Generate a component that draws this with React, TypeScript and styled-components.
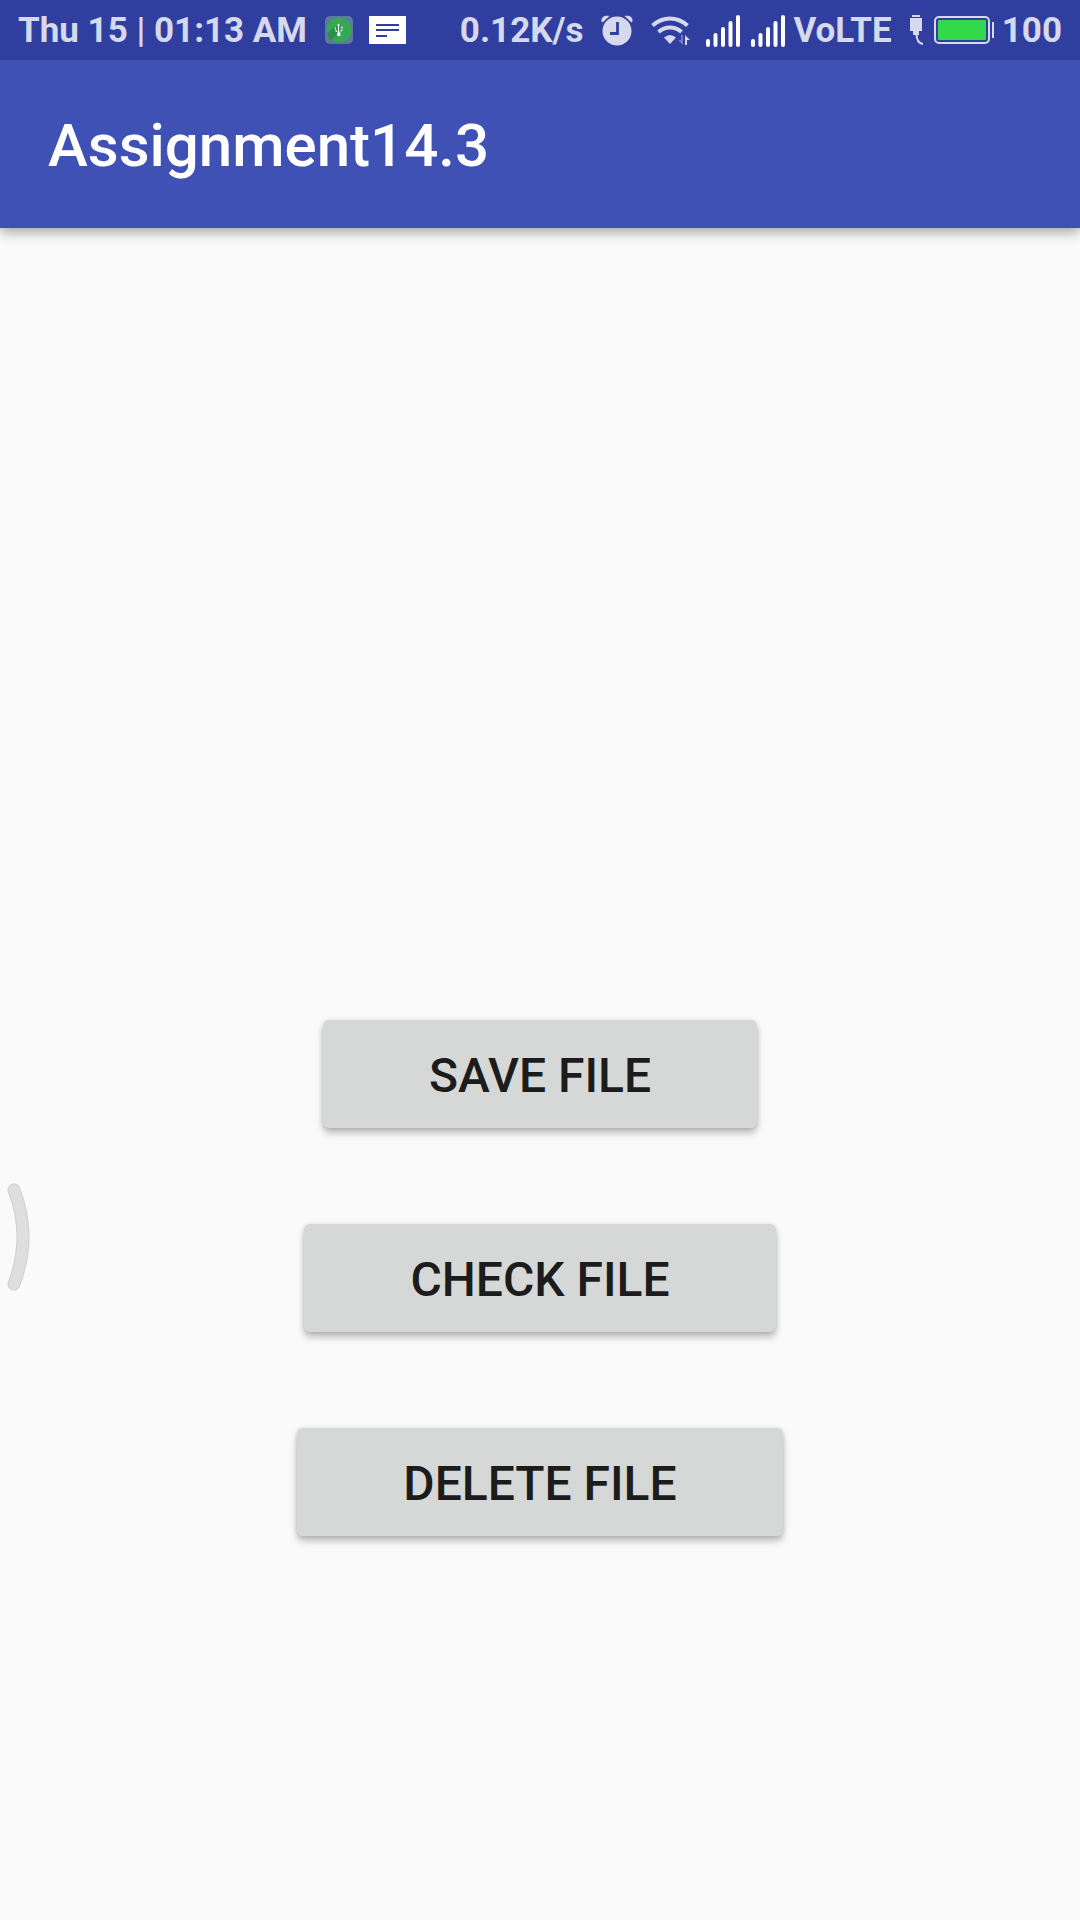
import React from "react";
import styled, { createGlobalStyle } from "styled-components";

const GlobalStyle = createGlobalStyle`
  *, *::before, *::after { box-sizing: border-box; }
  body {
    margin: 0;
    background: #fafafa;
    font-family: Roboto, "Noto Sans", sans-serif;
  }
`;

const Screen = styled.div`
  display: flex;
  flex-direction: column;
  min-height: 100vh;
`;

const StatusBar = styled.div`
  position: relative;
  z-index: 1;
  display: flex;
  align-items: center;
  justify-content: space-between;
  height: 60px;
  padding: 0 18px;
  background: #303f9f;
  color: #d6d9ec;
  font-size: 35px;
  font-weight: 700;
  line-height: 40px;
  white-space: nowrap;
`;

const StatusGroup = styled.div<{ $gap: number }>`
  display: flex;
  align-items: center;
  gap: ${(p) => p.$gap}px;
`;

const StatusText = styled.span`
  padding-top: 2px;
`;

const Glyph = styled.svg`
  display: block;
  flex: none;
`;

const AppBar = styled.header`
  display: flex;
  align-items: center;
  height: 168px;
  padding: 4px 48px 0;
  background: #3f51b5;
  box-shadow: 0 4px 12px rgba(0, 0, 0, 0.36);
`;

const Title = styled.h1`
  margin: 0;
  color: #ffffff;
  font-size: 60px;
  font-weight: 500;
  line-height: 72px;
`;

const Content = styled.main`
  position: relative;
  flex: 1;
  display: grid;
  grid-template-rows: 1fr auto 1fr;
  justify-items: center;
`;

const Actions = styled.div`
  grid-row: 3;
  display: flex;
  flex-direction: column;
  align-items: center;
  gap: 96px;
  padding-top: 96px;
`;

const ActionButton = styled.button`
  height: 108px;
  padding: 3px 106px 0;
  border: 0;
  border-radius: 6px;
  background: #d6d8d7;
  color: #1c1c1c;
  box-shadow: 0 5px 7px rgba(0, 0, 0, 0.26), 0 0 4px rgba(0, 0, 0, 0.1);
  font: 500 48px/56px Roboto, "Noto Sans", sans-serif;
  text-transform: uppercase;
  cursor: pointer;
`;

const PrimaryAction = styled(ActionButton)`
  grid-row: 2;
`;

const EdgeHandle = styled.svg`
  position: absolute;
  left: 0;
  top: 948px;
`;

const UsbAppIcon = () => (
  <Glyph width="28" height="28" viewBox="0 0 28 28">
    <rect width="28" height="28" rx="5" fill="#5b7a9c" />
    <circle cx="14" cy="14" r="12.5" fill="#34a853" />
    <path d="M2 17L14 8l1 9-9 7a12.500 12.500 0 0 1-4-7z" fill="#2b8f47" />
    <path d="M13.500 8v10" fill="none" stroke="#fff" strokeWidth="1" />
    <path d="M10.500 11.500v3l3 2.500M17 10.500v3.500l-3.500 3" fill="none" stroke="#fff" strokeWidth="1.200" strokeDasharray="2 1" />
    <path d="M12 9.500l1.500-2 1.500 2z" fill="#fff" />
    <rect x="12" y="17" width="3.500" height="3" rx="1" fill="#fff" />
  </Glyph>
);

const MessageIcon = () => (
  <Glyph width="37" height="28" viewBox="0 0 37 28">
    <path d="M0 0h37v28H0z" fill="#fff" />
    <path d="M7 9h23M7 14h23M7 20h11" stroke="#303f9f" strokeWidth="2" />
  </Glyph>
);

const AlarmIcon = () => (
  <Glyph width="32" height="32" viewBox="0 0 32 32" fill="#d6d9ec">
    <circle cx="16" cy="17" r="14.500" />
    <path d="M0.500 7.500C0 3 3.500 1 8.500 2L1.500 8.500zM31.500 7.500C32 3 28.500 1 23.500 2l7 6.500z" />
    <path d="M16.500 8v11.500H9" fill="none" stroke="#303f9f" strokeWidth="2.800" />
  </Glyph>
);

const WifiIcon = () => (
  <Glyph width="39" height="30" viewBox="0 0 39 30">
    <g fill="none" stroke="#d6d9ec" strokeWidth="4">
      <path d="M1.500 10.500Q9.500 3.500 19 3.500T36.500 10.500" />
      <path d="M7.500 17Q12.500 12.500 19 12.500T30.500 17" />
    </g>
    <path d="M13 22.500Q19 17.500 25 22.500L19 29z" fill="#d6d9ec" />
    <path d="M32 20v10l-5-5h3v-5z" fill="#7079bc" />
    <path d="M34 30V20l5 5h-3v5z" fill="#d6d9ec" />
  </Glyph>
);

const SignalIcon = () => (
  <Glyph width="34" height="34" viewBox="0 0 34 34">
    <path d="M2 28v4M9.500 22V32M17 16V32M24.500 10V32M32 4V32" stroke="#fff" strokeWidth="4" strokeLinecap="round" />
  </Glyph>
);

const PlugIcon = () => (
  <Glyph width="13" height="30" viewBox="0 0 13 30" fill="#d6d9ec">
    <path d="M2 0h8v2H2zM0 3h12v13H9v4H3v-4H0z" />
    <path d="M6.500 19q0 9 6.500 10" fill="none" stroke="#d6d9ec" strokeWidth="2" />
  </Glyph>
);

const BatteryIcon = () => (
  <Glyph width="60" height="28" viewBox="0 0 60 28">
    <rect x="1" y="1" width="54" height="26" rx="4" fill="none" stroke="#d6d9ec" strokeWidth="2" />
    <rect x="4" y="4" width="48" height="20" rx="1" fill="#34d94b" />
    <path d="M58 6h2v16h-2z" fill="#d6d9ec" />
  </Glyph>
);

export default function App() {
  return (
    <Screen>
      <GlobalStyle />
      <StatusBar>
        <StatusGroup $gap={18}>
          <StatusText>Thu 15 | 01:13 AM</StatusText>
          <StatusGroup $gap={16}>
            <UsbAppIcon />
            <MessageIcon />
          </StatusGroup>
        </StatusGroup>
        <StatusGroup $gap={16}>
          <StatusGroup $gap={18}>
            <StatusText>0.12K/s</StatusText>
            <AlarmIcon />
            <WifiIcon />
          </StatusGroup>
          <StatusGroup $gap={8}>
            <StatusGroup $gap={11}>
              <SignalIcon />
              <SignalIcon />
            </StatusGroup>
            <StatusGroup $gap={18}>
              <StatusText>VoLTE</StatusText>
              <StatusGroup $gap={11}>
                <PlugIcon />
                <BatteryIcon />
              </StatusGroup>
            </StatusGroup>
            <StatusText>100</StatusText>
          </StatusGroup>
        </StatusGroup>
      </StatusBar>
      <AppBar>
        <Title>Assignment14.3</Title>
      </AppBar>
      <Content>
        <PrimaryAction type="button">Save file</PrimaryAction>
        <Actions>
          <ActionButton type="button">Check file</ActionButton>
          <ActionButton type="button">Delete file</ActionButton>
        </Actions>
        <EdgeHandle width="36" height="120" viewBox="0 0 36 120" fill="none" strokeLinecap="round">
          <path d="M14 14Q32 60 14 108" stroke="#cfcfcf" strokeWidth="13" />
          <path d="M14 14Q32 60 14 108" stroke="#dedede" strokeWidth="11" />
        </EdgeHandle>
      </Content>
    </Screen>
  );
}
